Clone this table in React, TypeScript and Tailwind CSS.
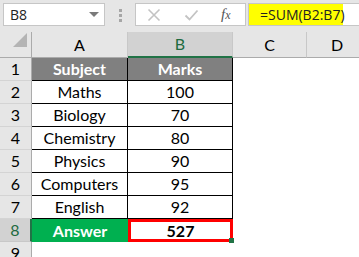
import { Fragment } from "react";

const rows = [
  { subject: "Maths", marks: "100" },
  { subject: "Biology", marks: "70" },
  { subject: "Chemistry", marks: "80" },
  { subject: "Physics", marks: "90" },
  { subject: "Computers", marks: "95" },
  { subject: "English", marks: "92" },
];

function RowHead({ n, active }: { n: number; active?: boolean }) {
  return (
    <div
      className={
        active
          ? "flex h-[23px] items-center justify-center border-b border-r-2 border-b-[#c8c8c8] border-r-[#217346] bg-[#d2d2d2] text-[#1e6b40]"
          : "flex h-[23px] items-center justify-center border-b border-r border-b-[#d4d4d4] border-r-[#ababab] bg-[#e6e6e6] text-black"
      }
    >
      {n}
    </div>
  );
}

export default function App() {
  return (
    <div className="h-[257px] w-[359px] overflow-hidden bg-white font-['Lato',sans-serif] text-[16px] text-black">
      {/* formula bar */}
      <div className="flex h-[32px] items-start gap-0 bg-[#e6e6e6] pt-[3px]">
        <div className="ml-[3px] flex h-[23px] w-[102px] items-center justify-between border border-[#c6c6c6] bg-white pl-[6px] pr-[5px] font-['Open_Sans',sans-serif] text-[14px] text-[#222]">
          <span>B8</span>
          <span className="h-0 w-0 border-x-[5px] border-t-[5px] border-x-transparent border-t-[#7a7a7a]" />
        </div>
        <div className="flex w-[30px] flex-col items-center gap-[2px] pt-[6px]">
          <span className="h-[3px] w-[3px] bg-[#a6a6a6]" />
          <span className="h-[3px] w-[3px] bg-[#a6a6a6]" />
          <span className="h-[3px] w-[3px] bg-[#a6a6a6]" />
        </div>
        <div className="flex h-[23px] w-[111px] items-center border border-[#c6c6c6] bg-white">
          <svg width="14" height="14" viewBox="0 0 14 14" className="ml-[11px]">
            <path d="M1.5 1.5 L12.5 12.5 M12.5 1.5 L1.5 12.5" stroke="#c3c3c3" strokeWidth="1.6" fill="none" />
          </svg>
          <svg width="15" height="14" viewBox="0 0 15 14" className="ml-[23px]">
            <path d="M1.5 7.5 L5.5 11.5 L13.5 2.5" stroke="#c3c3c3" strokeWidth="1.8" fill="none" />
          </svg>
          <span className="ml-[22px] font-['Liberation_Serif',serif] text-[15px] italic text-[#555]">
            f<span className="text-[12px]">x</span>
          </span>
        </div>
        <div className="ml-[2px] flex h-[23px] flex-1 border-y border-l border-[#c6c6c6] bg-white">
          <div className="flex h-full w-[94px] items-center bg-[#ffff00] pl-[11px] font-['Open_Sans',sans-serif] text-[14px] text-[#222]">
            =SUM(B2:B7)
          </div>
        </div>
      </div>

      {/* grid */}
      <div className="grid grid-cols-[32px_96px_105px_74px_60px]">
        {/* column headers */}
        <div className="relative h-[26px] border-b border-r border-[#ababab] bg-[#e6e6e6]">
          <span className="absolute bottom-[10px] right-[4px] h-0 w-0 border-b-[14px] border-l-[14px] border-b-[#b4b4b4] border-l-transparent" />
        </div>
        <div className="flex h-[26px] items-center justify-center border-b border-r border-b-[#ababab] border-r-[#c8c8c8] bg-[#e6e6e6]">
          A
        </div>
        <div className="flex h-[26px] items-center justify-center border-b-2 border-r border-b-[#217346] border-r-[#c8c8c8] bg-[#d2d2d2] text-[#1e6b40]">
          B
        </div>
        <div className="flex h-[26px] items-center justify-center border-b border-r border-b-[#ababab] border-r-[#c8c8c8] bg-[#e6e6e6]">
          C
        </div>
        <div className="flex h-[26px] items-center justify-center border-b border-b-[#ababab] bg-[#e6e6e6]">
          D
        </div>

        {/* row 1 */}
        <RowHead n={1} />
        <div className="flex h-[23px] items-center justify-center border-b border-r border-black bg-[#808080] font-bold text-white">
          Subject
        </div>
        <div className="flex h-[23px] items-center justify-center border-b border-r border-black bg-[#808080] font-bold text-white">
          Marks
        </div>
        <div />
        <div />

        {rows.map((r, i) => (
          <Fragment key={r.subject}>
            <RowHead n={i + 2} />
            <div className="flex h-[23px] items-center justify-center border-b border-r border-black">
              {r.subject}
            </div>
            <div className="flex h-[23px] items-center justify-center border-b border-r border-black">
              {r.marks}
            </div>
            <div />
            <div />
          </Fragment>
        ))}

        {/* row 8 */}
        <RowHead n={8} active />
        <div className="flex h-[23px] items-center justify-center bg-[#00b050] font-bold text-white">
          Answer
        </div>
        <div className="relative flex h-[23px] items-center justify-center border-[3px] border-[#ff0000] font-bold">
          527
          <span className="absolute -bottom-[4px] -right-[4px] h-[5px] w-[5px] bg-[#217346]" />
        </div>
        <div />
        <div />

        <RowHead n={9} />
      </div>
    </div>
  );
}
